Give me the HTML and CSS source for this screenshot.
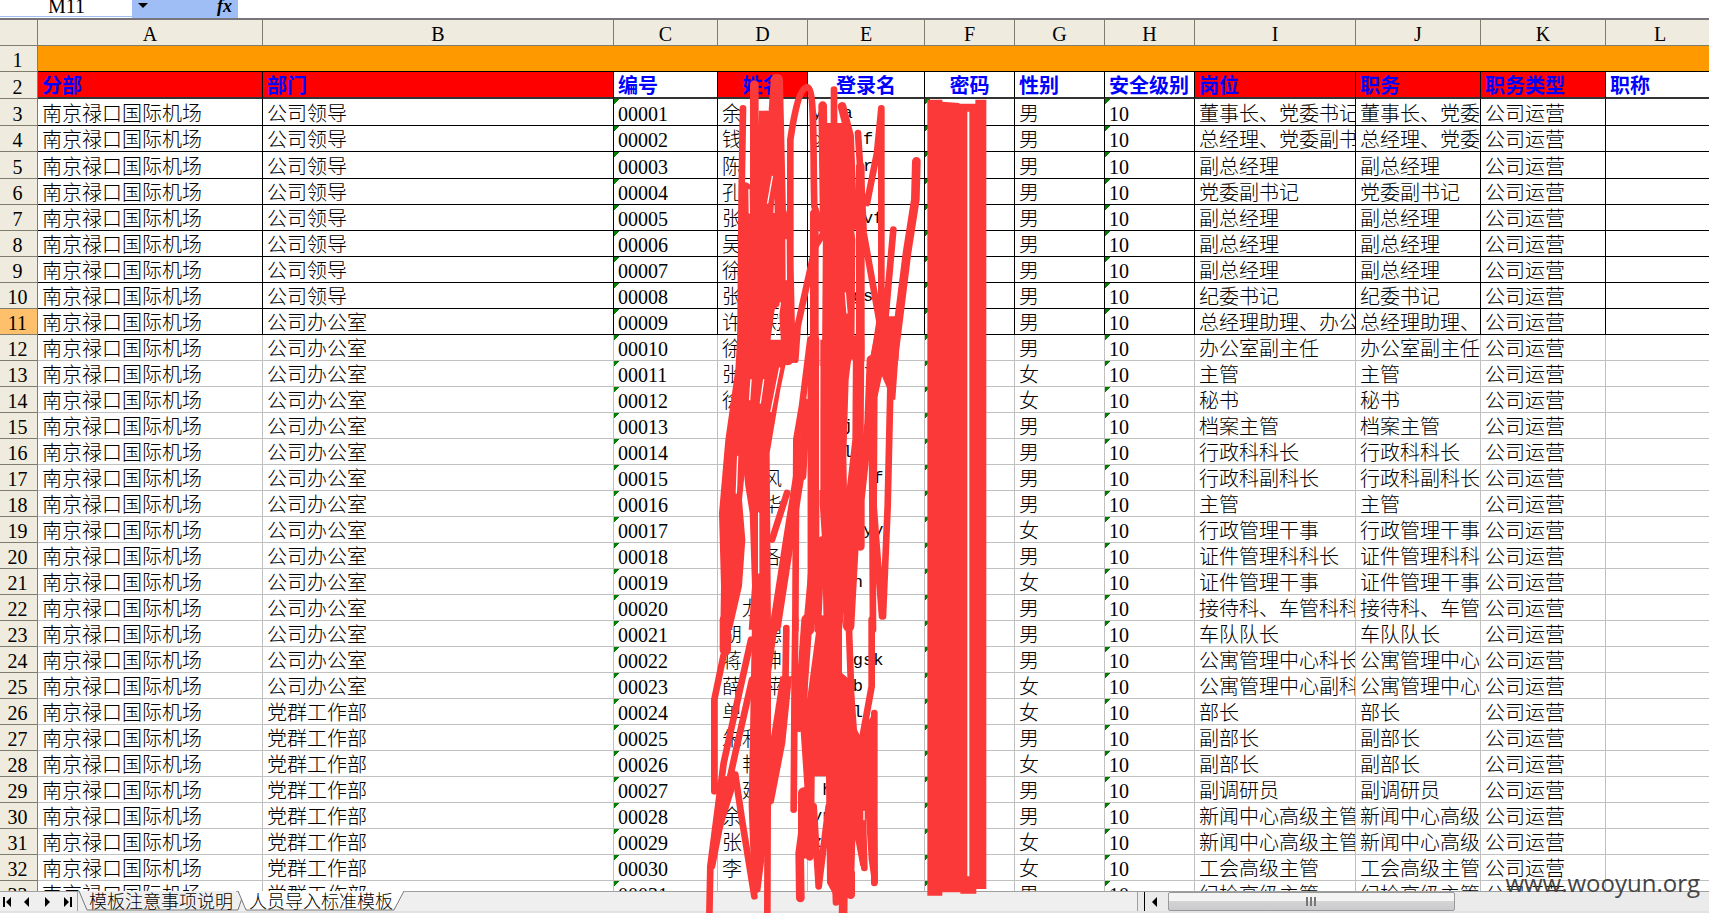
FILE: index.html
```html
<!DOCTYPE html>
<html lang="zh-CN">
<head>
<meta charset="utf-8">
<title>人员导入标准模板</title>
<link rel="stylesheet" href="styles.css">
</head>
<body>
<div class="app">
  <header class="formula-bar">
    <input class="name-box" aria-label="名称框" value="M11">
    <div class="formula-tools">
      <button class="tool" aria-label="展开名称框"><svg width="10" height="6" viewBox="0 0 10 6"><path d="M0 0H10L5 5Z"/></svg></button>
      <button class="tool fx" aria-label="插入函数">fx</button>
    </div>
    <input class="formula" aria-label="编辑栏">
  </header>

  <main class="sheet">
    <table class="grid">
      <colgroup>
        <col class="w-head"><col class="w-a"><col class="w-b"><col class="w-c"><col class="w-d"><col class="w-e"><col class="w-d"><col class="w-d"><col class="w-d"><col class="w-i"><col class="w-j"><col class="w-j"><col>
      </colgroup>
      <thead>
        <tr class="letters"><th></th><th>A</th><th>B</th><th>C</th><th>D</th><th>E</th><th>F</th><th>G</th><th>H</th><th>I</th><th>J</th><th>K</th><th>L</th></tr>
        <tr class="banner"><th class="num">1</th><td colspan="12"></td></tr>
        <tr class="titles"><th class="num">2</th><td class="req">分部</td><td class="req">部门</td><td>编号</td><td class="req mid">姓名</td><td class="mid">登录名</td><td class="mid">密码</td><td>性别</td><td>安全级别</td><td class="req">岗位</td><td class="req">职务</td><td class="req">职务类型</td><td>职称</td></tr>
      </thead>
      <tbody id="rows"></tbody>
    </table>
  </main>

  <svg class="marker" width="340" height="840" viewBox="-10 -20 1020 2520" aria-hidden="true">
    <g>
      <path class="s20" d="M188 86L184 330L180 840M330 180L330 560L336 840M330 180C345 80 360 25 380 22C405 25 397 200 402 380L425 450M345 840L352 740L405 500L430 460M461 30V840M533 160L545 350L550 460L600 740M603 86V720M603 86L590 220L560 370M639 450L615 720"/>
      <path class="s26" d="M222 15V840M402 400V840M427 78L432 460M485 80L508 170L518 440M708 245L705 360L680 520L640 840M540 260V840"/>
      <path class="s34" d="M288 0L262 400L215 840M291 0L300 400L310 640M195 325L190 840M260 110L240 400L210 840M303 400L310 640L322 840"/>
      <path class="fill" d="M236 93L262 93L270 300L290 640L262 840H170L178 520L215 400Z"/>
      <path class="fill" d="M430 130L505 130L515 400L525 480L522 840H425Z"/>
      <path class="fill" d="M590 710H650L655 840H570Z"/>
      <path class="fill" d="M205 400H300L318 660L270 700V840H190Z"/>
      <path class="gap" d="M276 290L262 370M206 330L207 400M317 480L318 600M300 670L275 830M495 640L500 700"/>
    </g>
    <g transform="translate(0 780)">
      <path class="fill" d="M170 0H215L200 330L185 480L195 600L185 740L155 870H120L122 740L116 520L135 300L165 90Z"/>
      <path class="fill" d="M170 0H350L325 30L300 150L268 340L272 870H205L215 740L208 520L195 440L170 200Z"/>
      <path class="fill" d="M420 0H520L505 120L498 350L500 450L505 560L520 640L500 740L485 870H430L425 600L418 490Z"/>
      <path class="fill" d="M580 0H658L645 180L635 180L605 110L592 170L565 180L570 50Z"/>
      <path class="s20" d="M336 0V60M390 0L365 200L348 300L345 870M320 460L275 600M630 150L622 500L608 830M582 130L580 500L605 830M575 300L578 870M425 600L412 870"/>
      <path class="s34" d="M400 0V700L385 870M360 310L355 410L325 600L285 860M535 0L533 300L516 450L518 620L505 860"/>
      <path class="s26" d="M572 60L565 250L540 480V620M378 190L365 410"/>
      <path class="gap" d="M298 85L272 215M250 120L240 190M172 350L168 460M212 120L208 180M418 80V450M235 520V700"/>
    </g>
    <g transform="translate(0 1620)">
      <path class="fill" d="M215 0H295L272 160V560L240 815L215 830L205 560Z"/>
      <path class="fill" d="M300 170H335L315 370L280 550L262 560L266 390Z"/>
      <path class="fill" d="M430 0H485V160L520 190L530 330L545 360L560 310L585 270L593 790H575L565 720L555 560L555 740L540 740L525 660L520 830L470 845L440 790L437 470H400L385 300L410 150Z"/>
      <path class="fill" d="M130 470L175 470L110 680L95 730Z"/>
      <path class="s34" d="M135 0V90M380 0L357 320M370 520V700"/>
      <path class="s20" d="M130 105L102 240V515M318 25L315 200L285 380L262 560L261 890M212 60L130 430L90 740L87 890M215 180L165 400L130 560L95 740M165 465L185 600L222 830M345 0L343 160L340 570M400 560L415 800M445 560L415 800M574 0V200L545 360M505 0L512 200M465 780L467 848M582 280V790M545 500L552 745"/>
      <path class="s26" d="M365 200L385 500L358 700L360 835M425 0L392 250L388 710M511 760V825M490 780L488 890"/>
      <path class="gap" d="M551 575V600"/>
    </g>
    <path class="fill" d="M741 60H786V66L837 70V72H885V60H918V2428H888V2442H840V2438H786V2448H741Z"/>
    <path class="slot" d="M864 96V2390"/>
  </svg>

  <footer class="tab-bar">
    <nav class="tab-nav" aria-label="工作表导航">
      <button aria-label="第一张"><svg width="8" height="10" viewBox="0 0 8 10"><path d="M0 0H2V10H0ZM8 0V10L3 5Z"/></svg></button>
      <button aria-label="上一张"><svg width="8" height="10" viewBox="0 0 8 10"><path d="M6 0V10L1 5Z"/></svg></button>
      <button aria-label="下一张"><svg width="8" height="10" viewBox="0 0 8 10"><path d="M1 0V10L6 5Z"/></svg></button>
      <button aria-label="最后一张"><svg width="8" height="10" viewBox="0 0 8 10"><path d="M0 0V10L5 5ZM6 0H8V10H6Z"/></svg></button>
    </nav>
    <div class="tabs">
      <button class="tab"><svg class="edge" viewBox="0 0 166 20" preserveAspectRatio="none"><path d="M1 0L9 19H160L166 1L158 0"/></svg><span>模板注意事项说明</span></button>
      <button class="tab active"><svg class="edge" viewBox="0 0 166 20" preserveAspectRatio="none"><path d="M0 0L8 19H156L166 0"/></svg><span>人员导入标准模板</span></button>
    </div>
    <div class="scroll">
      <button class="scroll-arrow" aria-label="向左滚动"><svg width="5" height="10" viewBox="0 0 5 10"><path d="M5 0V10L0 5Z"/></svg></button>
      <div class="track"><div class="thumb"><i></i><i></i><i></i></div></div>
    </div>
  </footer>
  <div class="watermark">www.wooyun.org</div>
</div>
<script src="rows.js"></script>
</body>
</html>
```
FILE: styles.css
```css
* { box-sizing: border-box; }
html, body { height: 100%; margin: 0; }
body {
  overflow: hidden;
  background: #fff;
  color: #000;
  font-family: "Liberation Serif", "Noto Sans CJK SC", serif;
  font-size: 20px;
  font-weight: 300;
}
button, input { font: inherit; color: inherit; border: 0; padding: 0; margin: 0; background: none; }
.app { position: relative; height: 100vh; display: flex; flex-direction: column; }

.formula-bar { flex: none; display: flex; height: 20px; border-bottom: 2px solid #77757a; overflow: hidden; }
.name-box { width: 132px; height: 17px; line-height: 17px; padding: 0 0 4px 48px; border-bottom: 1px solid #9ebef5; }
.formula-tools { width: 106px; height: 18px; display: flex; justify-content: space-between; align-items: flex-start; padding: 0 6px; background: #9ebef5; }
.tool { height: 12px; display: flex; align-items: center; }
.fx { font-style: italic; font-weight: bold; font-size: 18px; }
.formula { flex: 1; height: 18px; }

.sheet { flex: 1; min-height: 0; overflow: hidden; }
.grid { width: calc(100% + 6px); table-layout: fixed; border-collapse: separate; border-spacing: 0; }
.w-head { width: 38px; } .w-a { width: 225px; } .w-b { width: 351px; } .w-c { width: 104px; }
.w-d { width: 90px; } .w-e { width: 117px; } .w-i { width: 161px; } .w-j { width: 125px; }
th, td {
  height: 26px;
  padding: 3px 0 0 4px;
  line-height: 22px;
  overflow: hidden;
  white-space: pre;
  text-align: left;
  border-right: 1px solid #c0c0c0;
  border-bottom: 1px solid #c0c0c0;
}
th { background: #efebde; font-weight: normal; text-align: center; padding: 3px 0 0; border-color: #7f7d6c; }
.num { padding-right: 2px; }
.current .num { background: #ffc06c; }
.ruled td { border-color: #000; }
.tall th, .tall td { height: 27px; }
.banner td { background: #ff9900; border-color: #000; }
.titles td { height: 27px; color: #00f; font-weight: bold; border-right-color: #000; border-bottom: 2px solid #333; }
.titles .req { background: #f00; }
.titles .mid { text-align: center; padding-left: 0; }
.flag { background: linear-gradient(135deg, #008000 0 4px, transparent 4px) no-repeat 0 0 / 7px 7px; }
.login { font-family: "Liberation Mono", monospace; font-size: 17px; }

.marker { position: absolute; left: 677px; top: 73px; fill: none; stroke: #fc3939; stroke-linecap: round; stroke-linejoin: round; }
.marker .fill { fill: #fc3939; stroke: none; }
.s20 { stroke-width: 20; } .s26 { stroke-width: 26; } .s34 { stroke-width: 34; }
.gap { stroke: #fff; stroke-width: 4; }
.slot { stroke: #fff; stroke-width: 6; stroke-linecap: butt; }

.tab-bar { flex: none; height: 22px; display: flex; background: #efefef; border-top: 1px solid #a0a0a0; border-bottom: 2px solid #e2e2e2; }
.tab-nav { width: 78px; display: flex; justify-content: space-between; align-items: center; padding: 0 5px 0 3px; border-right: 1px solid #a0a0a0; }
.tab-nav button { display: flex; }
.tabs { flex: 1; display: flex; }
.tab { position: relative; width: 166px; height: 20px; line-height: 20px; font-size: 18px; white-space: nowrap; }
.tab + .tab { margin-left: -6px; }
.tab span { position: relative; }
.edge { position: absolute; left: 0; top: -1px; width: 100%; height: 20px; fill: #efefef; stroke: #777; }
.active .edge { fill: #fff; }
.scroll { width: 572px; display: flex; background: #ebebeb; border-left: 1px solid #a0a0a0; }
.scroll-arrow { width: 24px; margin-left: 6px; padding-left: 7px; border-left: 1px solid #000; display: flex; align-items: center; }
.track { flex: 1; display: flex; }
.thumb { width: 53%; height: 19px; display: flex; justify-content: center; align-items: center; gap: 2px; border: 1px solid #999; border-radius: 2px; background: linear-gradient(#f4f4f4 0 45%, #d4d4d6 50%, #cacacc); }
.thumb i { width: 2px; height: 9px; background: #777; }

.watermark { position: absolute; right: 9px; bottom: 12px; font-family: "Open Sans", sans-serif; font-size: 24px; font-weight: 400; line-height: 36px; color: #444; }
```
FILE: rows.js
```js
// name, login, sex, post; department switches at row 11 and row 26
const people = [
  ["余", "y  a", "男", "董事长、党委书记"],
  ["钱", "g    f", "男", "总经理、党委副书记"],
  ["陈", "     r", "男", "副总经理"],
  ["孔", "", "男", "党委副书记"],
  ["张", "     vf", "男", "副总经理"],
  ["吴", "", "男", "副总经理"],
  ["徐", "", "男", "副总经理"],
  ["张", "    gs", "男", "纪委书记"],
  ["许　民", "", "男", "总经理助理、办公室主任"],
  ["徐", "", "男", "办公室副主任"],
  ["张", "     l", "女", "主管"],
  ["徐", "", "女", "秘书"],
  ["", "   j", "男", "档案主管"],
  ["", "   l", "男", "行政科科长"],
  ["　　风", "      f", "男", "行政科副科长"],
  ["　　华", "", "男", "主管"],
  ["", "     yy", "女", "行政管理干事"],
  ["　　各", "", "男", "证件管理科科长"],
  ["", "x   n", "女", "证件管理干事"],
  ["　龙", "", "男", "接待科、车管科科长"],
  ["胡　德", "", "男", "车队队长"],
  ["蒋　坤", "j   gsk", "男", "公寓管理中心科长"],
  ["薛　萍", "x   b", "女", "公寓管理中心副科长"],
  ["单", "    l", "女", "部长"],
  ["朱利", "", "男", "副部长"],
  ["　艳", "", "女", "副部长"],
  ["　廷", " h", "男", "副调研员"],
  ["余", "yu", "男", "新闻中心高级主管"],
  ["张", "z", "女", "新闻中心高级主管"],
  ["李", "", "女", "工会高级主管"],
  ["", "", "男", "纪检高级主管"]
];
const body = document.getElementById("rows");
people.forEach(([name, login, sex, post], i) => {
  const number = i + 3;
  const dept = number < 11 ? "公司领导" : number < 26 ? "公司办公室" : "党群工作部";
  const row = body.insertRow();
  if (number < 12) row.classList.add("ruled");
  if (number === 3 || number === 5) row.classList.add("tall");
  if (number === 11) row.classList.add("current");
  const head = document.createElement("th");
  head.className = "num";
  head.textContent = number;
  row.append(head);
  const cells = ["南京禄口国际机场", dept, String(i + 1).padStart(5, "0"), name, login, "", sex, "10", post, post, "公司运营", ""];
  cells.forEach((text, c) => {
    const cell = row.insertCell();
    cell.textContent = text;
    if (c === 2 || c === 5 || c === 7) cell.classList.add("flag");
    if (c === 4) cell.classList.add("login");
  });
});
```
